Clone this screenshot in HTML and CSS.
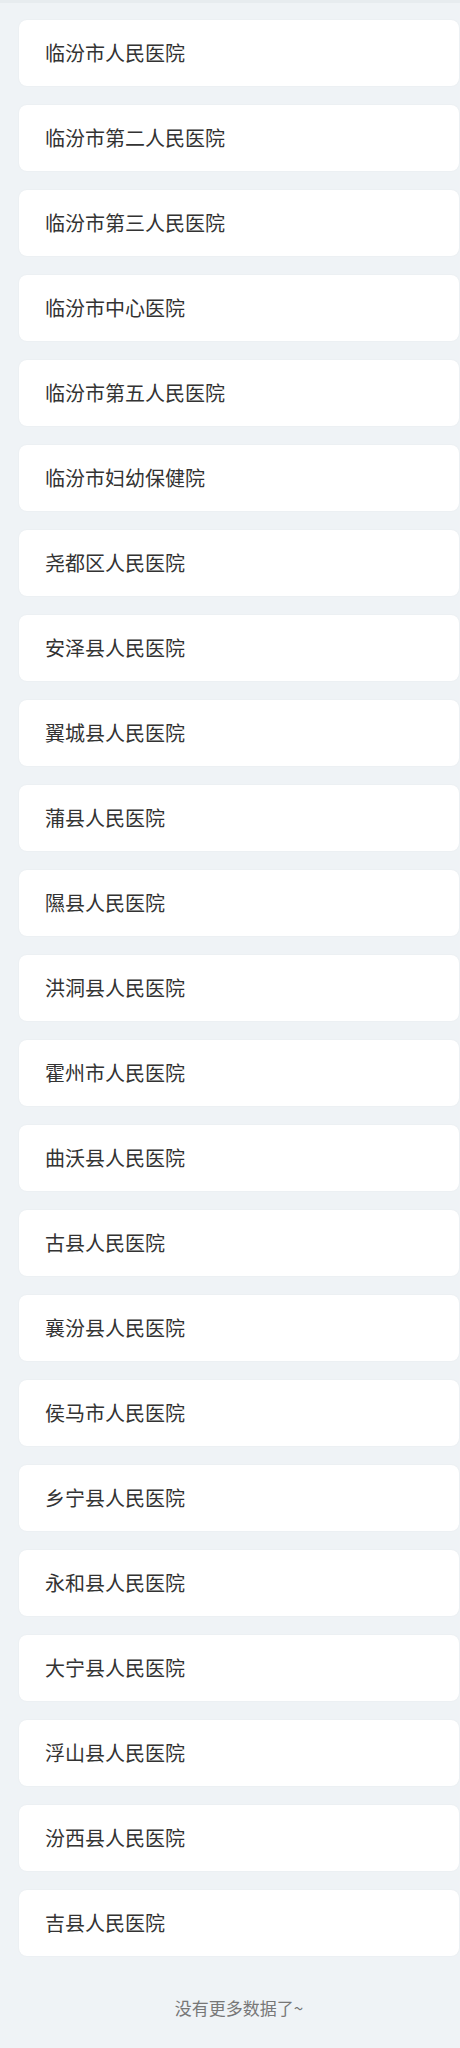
FILE: index.html
```html
<!DOCTYPE html>
<html lang="zh-CN">
<head>
<meta charset="utf-8">
<link rel="stylesheet" href="styles.css">
</head>
<body>
<div class="topbar"></div>
<main class="page">
  <ul class="list">
    <li class="card">临汾市人民医院</li>
    <li class="card">临汾市第二人民医院</li>
    <li class="card">临汾市第三人民医院</li>
    <li class="card">临汾市中心医院</li>
    <li class="card">临汾市第五人民医院</li>
    <li class="card">临汾市妇幼保健院</li>
    <li class="card">尧都区人民医院</li>
    <li class="card">安泽县人民医院</li>
    <li class="card">翼城县人民医院</li>
    <li class="card">蒲县人民医院</li>
    <li class="card">隰县人民医院</li>
    <li class="card">洪洞县人民医院</li>
    <li class="card">霍州市人民医院</li>
    <li class="card">曲沃县人民医院</li>
    <li class="card">古县人民医院</li>
    <li class="card">襄汾县人民医院</li>
    <li class="card">侯马市人民医院</li>
    <li class="card">乡宁县人民医院</li>
    <li class="card">永和县人民医院</li>
    <li class="card">大宁县人民医院</li>
    <li class="card">浮山县人民医院</li>
    <li class="card">汾西县人民医院</li>
    <li class="card">吉县人民医院</li>
  </ul>
  <p class="nomore">没有更多数据了~</p>
</main>
</body>
</html>
```
FILE: styles.css
```css
html, body {
  margin: 0;
  padding: 0;
  background: #eff3f6;
  font-family: "Noto Sans CJK SC", "Noto Sans", sans-serif;
}
.topbar {
  height: 3px;
  background: #e7ecef;
}
.page {
  padding: 17px 1px 0 19px;
}
.list {
  list-style: none;
  margin: 0;
  padding: 0;
  display: flex;
  flex-direction: column;
  gap: 19px;
}
.card {
  height: 66px;
  box-sizing: border-box;
  display: flex;
  align-items: center;
  padding: 0 0 0 26px;
  background: #fff;
  border-radius: 8px;
  box-shadow: 0 0 2px rgba(0, 0, 0, 0.05);
  font-size: 20px;
  color: #333;
  line-height: 1;
}
.nomore {
  margin: 0;
  padding: 40px 0 0;
  text-align: center;
  font-size: 17px;
  color: #777;
  line-height: 23px;
}
```
